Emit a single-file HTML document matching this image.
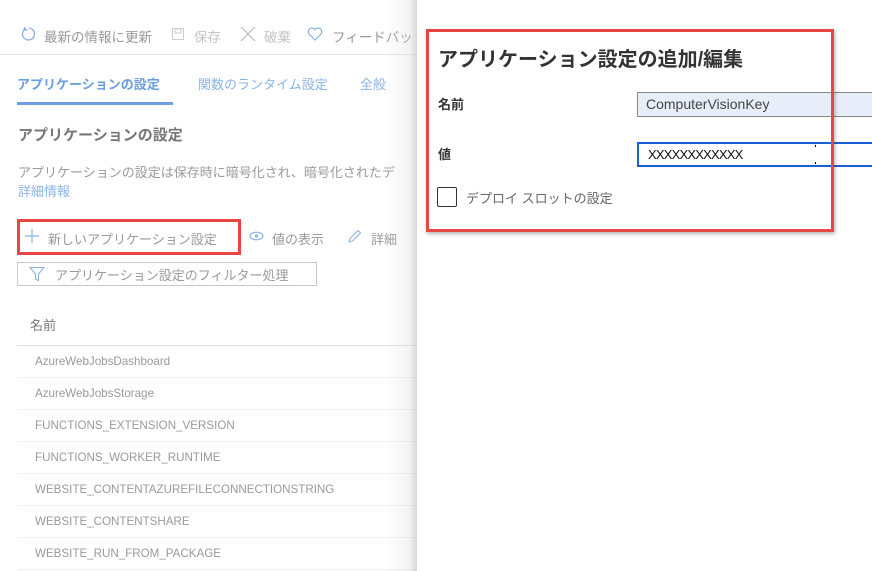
<!DOCTYPE html>
<html><head><meta charset="utf-8"><style>
*{margin:0;padding:0;box-sizing:border-box}
body{width:872px;height:571px;overflow:hidden;background:#fff;position:relative;font-family:"Liberation Sans","Noto Sans CJK JP",sans-serif;}
.a{position:absolute;white-space:nowrap}
.g{color:#9a9a9a}
.row{position:absolute;left:17px;width:400px;height:32px;border-bottom:1px solid #f0f0f0;font-size:11.6px;color:#9a9a9a;padding:9px 0 0 18px}
</style></head><body>
<!-- toolbar -->
<svg class="a" style="left:21px;top:26px" width="16" height="16" viewBox="0 0 16 16"><path d="M5 2.5A6 6 0 1 0 8 2" fill="none" stroke="#8ab0e0" stroke-width="1.3"/><path d="M3.5 1v3h3" fill="none" stroke="#8ab0e0" stroke-width="1.2"/></svg>
<div class="a g" style="left:44px;top:26px;font-size:13.5px">最新の情報に更新</div>
<svg class="a" style="left:172px;top:28px" width="12" height="12"><rect x="0.5" y="0.5" width="11" height="11" fill="none" stroke="#ccc"/><rect x="3" y="1" width="6" height="4" fill="none" stroke="#ccc"/></svg>
<div class="a" style="left:194px;top:26px;font-size:13.5px;color:#c4c4c4">保存</div>
<svg class="a" style="left:240px;top:26px" width="16" height="16"><path d="M1 1L15 15M15 1L1 15" stroke="#c4c4c4" stroke-width="1.3"/></svg>
<div class="a" style="left:264px;top:26px;font-size:13.5px;color:#c4c4c4">破棄</div>
<svg class="a" style="left:307px;top:27px" width="16" height="14" viewBox="0 0 16 14"><path d="M8 13L2 7A3.3 3.3 0 0 1 8 2.5A3.3 3.3 0 0 1 14 7Z" fill="none" stroke="#8ab0e0" stroke-width="1.2"/></svg>
<div class="a g" style="left:332px;top:26px;font-size:13.5px">フィードバッ</div>
<div class="a" style="left:0;top:54px;width:420px;height:1px;background:#e4e4e4"></div>
<!-- tabs -->
<div class="a" style="left:17px;top:74px;font-size:13px;color:#6a9ee0;font-weight:bold">アプリケーションの設定</div>
<div class="a" style="left:198px;top:74px;font-size:13px;color:#8ab4e8">関数のランタイム設定</div>
<div class="a" style="left:360px;top:74px;font-size:13px;color:#8ab4e8">全般</div>
<div class="a" style="left:17px;top:102px;width:156px;height:3px;background:#6a9ee0"></div>
<div class="a" style="left:18px;top:124px;font-size:15px;color:#777;font-weight:bold">アプリケーションの設定</div>
<div class="a g" style="left:18px;top:162px;font-size:13px">アプリケーションの設定は保存時に暗号化され、暗号化されたデ</div>
<div class="a" style="left:18px;top:181px;font-size:13px;color:#8ab4e8">詳細情報</div>
<!-- actions -->
<svg class="a" style="left:25px;top:229px" width="14" height="14"><path d="M7 0V14M0 7H14" stroke="#8ab4e8" stroke-width="1.2"/></svg>
<div class="a g" style="left:48px;top:229px;font-size:13px">新しいアプリケーション設定</div>
<div class="a" style="left:17px;top:219px;width:224px;height:36px;border:3px solid #e84545"></div>
<svg class="a" style="left:249px;top:231px" width="15" height="10"><ellipse cx="7.5" cy="5" rx="6.5" ry="3.8" fill="none" stroke="#8ab4e8" stroke-width="1.2"/><circle cx="7.5" cy="5" r="1.6" fill="#8ab4e8"/></svg>
<div class="a g" style="left:272px;top:229px;font-size:13px">値の表示</div>
<svg class="a" style="left:347px;top:229px" width="15" height="15"><path d="M2 13L3 9.5L11 1.5L13.5 4L5.5 12Z" fill="none" stroke="#8ab4e8" stroke-width="1.1"/></svg>
<div class="a g" style="left:371px;top:229px;font-size:13px">詳細</div>
<div class="a" style="left:17px;top:262px;width:300px;height:24px;border:1px solid #c8c8c8"></div>
<svg class="a" style="left:29px;top:266px" width="16" height="16"><path d="M1 1.5H15L9.5 8V14.5L6.5 13V8Z" fill="none" stroke="#8ab4e8" stroke-width="1.1"/></svg>
<div class="a g" style="left:55px;top:265px;font-size:13px">アプリケーション設定のフィルター処理</div>
<!-- list -->
<div class="a" style="left:30px;top:315px;font-size:13px;color:#777">名前</div>
<div class="a" style="left:17px;top:345px;width:400px;height:1px;background:#e0e0e0"></div>
<div class="row" style="top:346px">AzureWebJobsDashboard</div>
<div class="row" style="top:378px">AzureWebJobsStorage</div>
<div class="row" style="top:410px">FUNCTIONS_EXTENSION_VERSION</div>
<div class="row" style="top:442px">FUNCTIONS_WORKER_RUNTIME</div>
<div class="row" style="top:474px">WEBSITE_CONTENTAZUREFILECONNECTIONSTRING</div>
<div class="row" style="top:506px">WEBSITE_CONTENTSHARE</div>
<div class="row" style="top:538px">WEBSITE_RUN_FROM_PACKAGE</div>
<!-- shadow -->
<div class="a" style="left:385px;top:0;width:32px;height:571px;background:linear-gradient(to right,rgba(255,255,255,0),rgba(215,215,215,.3) 75%,rgba(185,185,185,.55))"></div>
<!-- panel -->
<div class="a" style="left:417px;top:0;width:455px;height:571px;background:#fff"></div>
<div class="a" style="left:438px;top:43px;font-size:20px;color:#333;font-weight:bold">アプリケーション設定の追加/編集</div>
<div class="a" style="left:438px;top:94px;font-size:13px;color:#333;font-weight:bold">名前</div>
<div class="a" style="left:637px;top:92px;width:240px;height:25px;border:1px solid #888;background:#e8eef9;font-size:14px;color:#444;padding:3px 0 0 8px">ComputerVisionKey</div>
<div class="a" style="left:438px;top:144px;font-size:13px;color:#333;font-weight:bold">値</div>
<div class="a" style="left:637px;top:142px;width:240px;height:25px;border:2px solid #1a5fd6;font-size:13px;color:#111;padding:3px 0 0 9px;letter-spacing:-0.8px">XXXXXXXXXXXX</div>
<div class="a" style="left:815px;top:145px;width:1px;height:2px;background:#000"></div>
<div class="a" style="left:815px;top:162px;width:1px;height:2px;background:#000"></div>
<div class="a" style="left:437px;top:187px;width:20px;height:20px;border:1px solid #333;border-radius:2px"></div>
<div class="a" style="left:466px;top:188px;font-size:13px;color:#666">デプロイ スロットの設定</div>
<div class="a" style="left:426px;top:29px;width:408px;height:203px;border:3px solid #e84545;box-shadow:1px 2px 4px rgba(0,0,0,.3)"></div>
</body></html>
